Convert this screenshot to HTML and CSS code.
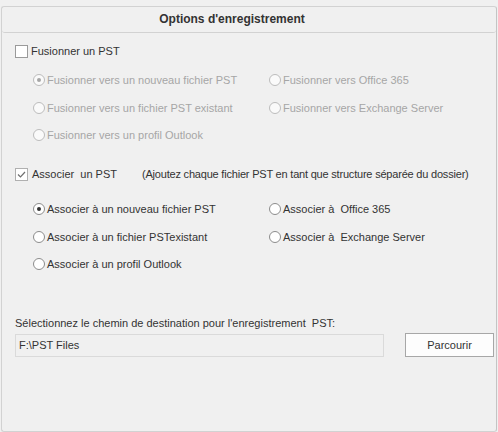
FILE: index.html
```html
<!DOCTYPE html>
<html lang="fr">
<head>
<meta charset="utf-8">
<link rel="stylesheet" href="styles.css">
</head>
<body>
<div class="panel">
  <div class="header">Options d'enregistrement</div>

  <div class="check-row first">
    <span class="checkbox"></span>
    <span class="label">Fusionner un PST</span>
  </div>

  <div class="options disabled group1">
    <div class="opt"><span class="radio on"></span><span>Fusionner vers un nouveau fichier PST</span></div>
    <div class="opt"><span class="radio"></span><span>Fusionner vers Office 365</span></div>
    <div class="opt"><span class="radio"></span><span>Fusionner vers un fichier PST existant</span></div>
    <div class="opt"><span class="radio"></span><span>Fusionner vers Exchange Server</span></div>
    <div class="opt"><span class="radio"></span><span>Fusionner vers un profil Outlook</span></div>
  </div>

  <div class="check-row second">
    <span class="checkbox checked">
      <svg width="11" height="11" viewBox="0 0 11 11"><path d="M2 5.5 L4.5 8 L9 3" fill="none" stroke="#6e6e6e" stroke-width="1.2"/></svg>
    </span>
    <span class="label label2">Associer&nbsp; un PST</span>
    <span class="note">(Ajoutez chaque fichier PST en tant que structure séparée du dossier)</span>
  </div>

  <div class="options group2">
    <div class="opt"><span class="radio on"></span><span>Associer à un nouveau fichier PST</span></div>
    <div class="opt"><span class="radio"></span><span>Associer à&nbsp; Office 365</span></div>
    <div class="opt"><span class="radio"></span><span>Associer à un fichier PSTexistant</span></div>
    <div class="opt"><span class="radio"></span><span>Associer à&nbsp; Exchange Server</span></div>
    <div class="opt"><span class="radio"></span><span>Associer à un profil Outlook</span></div>
  </div>

  <div class="dest-label">Sélectionnez le chemin de destination pour l'enregistrement&nbsp; PST:</div>
  <div class="dest-row">
    <div class="path">F:\PST Files</div>
    <div class="browse">Parcourir</div>
  </div>
</div>
</body>
</html>
```

FILE: styles.css
```css
html, body {
  margin: 0;
  padding: 0;
  background: #f0f0f0;
}
body {
  font-family: "Liberation Sans", Arial, sans-serif;
  font-size: 11px;
  color: #333333;
  width: 498px;
  height: 432px;
  overflow: hidden;
}
.panel {
  margin: 6px 1px 0 1px;
  border: 1px solid #d2d2d2;
  border-right-color: #c4c4c4;
  border-radius: 3px;
  box-sizing: border-box;
  height: 426px;
  padding: 0 0 0 13px;
  white-space: nowrap;
}
.header {
  height: 25px;
  line-height: 25px;
  margin-left: -13px;
  text-align: center;
  font-weight: bold;
  font-size: 12px;
  color: #333333;
  border-bottom: 1px solid #d2d2d2;
  border-radius: 3px;
  padding-right: 34px;
}
.check-row {
  display: flex;
  align-items: center;
  height: 16px;
}
.check-row.first { margin-top: 10px; }
.check-row.second { margin-top: 23px; }
.checkbox {
  width: 11px;
  height: 11px;
  border: 1px solid #9a9a9a;
  background: #ffffff;
  display: inline-flex;
  align-items: center;
  justify-content: center;
  flex: none;
}
.checkbox.checked { border-color: #b0b0b0; }
.label { margin-left: 3px; }
.label2 { margin-left: 4px; }
.note { margin-left: 25px; letter-spacing: -0.2px; }
.options {
  display: grid;
  grid-template-columns: 236px auto;
  grid-auto-rows: 16px;
  row-gap: 11.5px;
  padding-left: 18px;
}
.group1 { margin-top: 13px; }
.group2 { margin-top: 19px; }
.opt {
  display: flex;
  align-items: center;
  height: 16px;
}
.radio {
  width: 10px;
  height: 10px;
  border: 1px solid #8c8c8c;
  border-radius: 50%;
  background: #ffffff;
  margin-right: 2px;
  flex: none;
  display: inline-flex;
  align-items: center;
  justify-content: center;
}
.radio.on::after {
  content: "";
  width: 4px;
  height: 4px;
  border-radius: 50%;
  background: #333333;
}
.disabled { color: #a6a6a6; }
.disabled .radio { border-color: #bcbcbc; background: #fafafa; }
.disabled .radio.on::after { background: #a6a6a6; }
.dest-label {
  margin-top: 43px;
  height: 16px;
  line-height: 16px;
}
.dest-row {
  display: flex;
  align-items: flex-start;
  margin-top: 2px;
}
.path {
  margin-top: 1px;
  width: 369px;
  height: 23px;
  box-sizing: border-box;
  border: 1px solid #dadada;
  line-height: 21px;
  padding-left: 3px;
}
.browse {
  margin-left: 21px;
  width: 89px;
  height: 24px;
  box-sizing: border-box;
  border: 1px solid #a7a7a7;
  background: #fdfdfd;
  text-align: center;
  line-height: 22px;
}
```
